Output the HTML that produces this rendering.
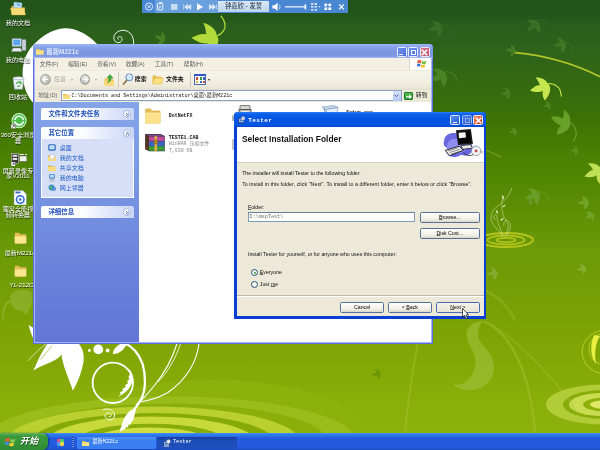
<!DOCTYPE html>
<html lang="zh-CN">
<head>
<meta charset="utf-8">
<title>Tester Setup</title>
<style>
*{box-sizing:border-box;margin:0;padding:0}
html,body{width:600px;height:450px;overflow:hidden;background:#4d7f14}
body{position:relative;filter:blur(0.35px);font-family:"Liberation Sans","Noto Sans CJK SC",sans-serif;font-size:5.6px;color:#000}
.abs{position:absolute}
.win,.layer{will-change:transform}
#bg{position:absolute;left:0;top:0;width:600px;height:450px}
.t{position:absolute;white-space:nowrap;line-height:1}
.cn{font-family:"Liberation Sans","Noto Sans CJK SC",sans-serif}
.mono{font-family:"Liberation Mono","Noto Sans CJK SC",monospace}
/* desktop icons */
.dlabel{position:absolute;color:#fff;font-size:6.1px;line-height:5.6px;text-align:center;width:44px;text-shadow:0.5px 0.5px 0.6px rgba(0,0,0,.75)}

/* windows */
.win{position:absolute}
.tb{position:absolute;left:0;top:0;right:0}
.cap{position:absolute;width:10px;height:9.6px;border-radius:1.5px;border:0.6px solid #fff}
.btn{position:absolute;height:11px;border:0.7px solid #56729c;border-radius:1.6px;background:linear-gradient(#fefefd,#f1efe6 70%,#d9d5c6);font-size:5.25px;text-align:center;line-height:9.4px;color:#000;letter-spacing:-0.02px}
.btn u,.dt u{text-decoration-thickness:0.35px;text-underline-offset:0.3px;text-decoration-color:rgba(0,0,0,.55)}
.dt{position:absolute;white-space:nowrap;font-size:5.25px;line-height:6px;color:#111}
.ph{position:absolute;left:5.9px;width:92.6px;height:12px;border-radius:2px 2px 0 0;background:linear-gradient(90deg,#fff 0%,#fbfcff 45%,#c9d5f8 100%);color:#1f4fb8;font-weight:bold;font-size:6.4px;line-height:12px;padding-left:7.4px;white-space:nowrap}
.ph i{position:absolute;right:3px;top:2px;width:8px;height:8px;border-radius:50%;background:#fff;border:0.5px solid #a9b9e0;font-style:normal;font-weight:normal;font-size:5px;line-height:6.6px;text-align:center;color:#2a4fa8}
.pi{position:absolute;left:24.5px;color:#215dc6;font-size:6px;line-height:7px;white-space:nowrap}
.pic{position:absolute;left:12.5px;width:8px;height:7.5px}
.mi{position:absolute;top:2.6px;font-size:5.7px;line-height:7px;color:#5b5b5b;white-space:nowrap}
</style>
</head>
<body>
<!-- BACKGROUND -->
<svg id="bg" viewBox="0 0 600 450">
<defs>
<linearGradient id="gbg" x1="0" y1="0" x2="0" y2="1">
<stop offset="0" stop-color="#22531a"/>
<stop offset="0.045" stop-color="#25571b"/>
<stop offset="0.05" stop-color="#2a5d1c"/>
<stop offset="0.12" stop-color="#2e631a"/>
<stop offset="0.25" stop-color="#3c7008"/>
<stop offset="0.36" stop-color="#4d8302"/>
<stop offset="0.48" stop-color="#5f9005"/>
<stop offset="0.55" stop-color="#6a9a08"/>
<stop offset="0.73" stop-color="#7da303"/>
<stop offset="0.9" stop-color="#8aae0a"/>
<stop offset="1" stop-color="#8fb30d"/>
</linearGradient>
<path id="leaf" d="M0 0 C-2 -5 -8 -7 -12.5 -6.5 C-10 -4 -9 -1 -8 1 C-12 1 -15 4 -18 6.5 C-14 8 -9 9 -5 7 C-6 11 -5 14 -3 16.5 C0 13 3 8 2 3 C1.5 1.5 1 0.5 0 0Z"/>
<path id="stem" d="M0 -0.3 C5 -1 10 2 12 6 C13 9 13 11 13.5 12.5" fill="none" stroke-width="1.1"/>
</defs>
<rect width="600" height="450" fill="url(#gbg)"/>
<!-- bottom-left concentric rings -->
<g>
<ellipse cx="212" cy="441" rx="162" ry="61" fill="#8db10c"/>
<ellipse cx="170" cy="441" rx="186" ry="44.5" fill="#9abc1a"/>
<ellipse cx="169" cy="441" rx="158" ry="37.4" fill="#8bae0a"/>
<ellipse cx="153" cy="441" rx="146" ry="34.4" fill="#b9d02e"/>
<ellipse cx="153" cy="441" rx="120" ry="28" fill="#86aa08"/>
<ellipse cx="151" cy="441" rx="103" ry="24.5" fill="#c8da3a"/>
<ellipse cx="151" cy="441" rx="73" ry="17.2" fill="#88ac0a"/>
<ellipse cx="150" cy="441" rx="58" ry="13.4" fill="#d0de42"/>
<ellipse cx="150" cy="441" rx="28" ry="6.4" fill="#8cb00c"/>
</g>
<!-- bottom-right rings -->
<g>
<ellipse cx="604" cy="404.5" rx="58" ry="20" fill="#b2cc38"/>
<ellipse cx="604" cy="404.5" rx="41" ry="14.4" fill="#88ac0a"/>
<ellipse cx="604" cy="404.5" rx="35" ry="11.6" fill="#c9dc50"/>
<ellipse cx="604" cy="404.5" rx="21" ry="6.8" fill="#8db00c"/>
<ellipse cx="604" cy="404.5" rx="14" ry="4.2" fill="#dfe866"/>
</g>
<!-- mid-right small rings -->
<g fill="none" stroke="#bcc81e" opacity="0.9">
<ellipse cx="506" cy="240" rx="27" ry="7" stroke-width="2"/>
<ellipse cx="506" cy="240" rx="18.5" ry="4.5" stroke-width="1.8"/>
<ellipse cx="506" cy="240" rx="9.5" ry="2.1" stroke-width="1.6"/>
</g>
<!-- faint swooshes bottom right -->
<g fill="none" stroke="#a8c63a" opacity="0.42">
<path d="M483 321 C510 332 530 370 535 433" stroke-width="2.4"/>
<path d="M489.5 323 C530 350 565 390 583 423" stroke-width="1.2"/>
<path d="M422 322 C414 360 408 400 405 433" stroke-width="2"/>
</g>
<path d="M482.7 320.7 C472 322 465 328 466.7 336 C468 346 476 352 475.5 362 C475 372 470 380 463 383.8 C459 385 455 384.6 452.4 383 C456 388 464 391 472 390 C480 389 486 386 490 380 C496 372 495 362 490 354 C485 346 478 342 478 334 C478 328 480 324 482.7 320.7Z" fill="#a8c548" opacity="0.5"/>
<path d="M484 290 C498 296 508 306 515 320" fill="none" stroke="#9dbd34" stroke-width="3" opacity="0.35"/>
<!-- white blob upper-left -->
<path d="M33.4 103 C27 96 23 86 22.6 74 C22.4 60 28 50 34.5 43.8 C42 36 52 29 64.8 28.2 C76 28 88 34 97 44 L124 70 L124 120 L34 120Z" fill="#fff"/>
<path d="M118.5 39.5 C117 38 118.4 36 120.4 36.6 C123 37.4 122.6 42 119 42.6 C114.6 43.2 112.4 38 114.8 34.4 C117.6 30 125.6 28.6 130 33 C133 36 133.8 40 133.6 44" fill="none" stroke="#fff" stroke-width="0.9"/>
<!-- lime leaves top -->
<use href="#leaf" transform="translate(217,36) rotate(16) scale(1.34)" fill="#b2da3a"/>
<path d="M217 36 C222 34 226 29 225 24 C224.4 20 222.6 18 220.8 15.8" fill="none" stroke="#b2da3a" stroke-width="1.3"/>
<use href="#leaf" transform="translate(165,38.5) rotate(35) scale(0.55)" fill="#457f26"/>
<!-- right-side leaves -->
<use href="#leaf" transform="translate(548,84) rotate(0) scale(1.0)" fill="#c6e650"/><use href="#stem" transform="translate(548,84) rotate(0) scale(1.0)" stroke="#c6e650"/>
<use href="#leaf" transform="translate(600.5,168) rotate(-8) scale(0.95)" fill="#bfe055"/><use href="#stem" transform="translate(600.5,168) rotate(-8) scale(0.95)" stroke="#bfe055"/>
<use href="#leaf" transform="translate(570,123) rotate(38) scale(1.05)" fill="#69a02a"/><use href="#stem" transform="translate(570,123) rotate(38) scale(1.05)" stroke="#69a02a"/>
<use href="#leaf" transform="translate(441,25.6) rotate(0) scale(0.7)" fill="#386d26"/><use href="#stem" transform="translate(441,25.6) rotate(0) scale(0.7)" stroke="#386d26"/>
<use href="#leaf" transform="translate(536.6,21.3) rotate(-25) scale(0.7)" fill="#3a7026"/><use href="#stem" transform="translate(536.6,21.3) rotate(-25) scale(0.7)" stroke="#3a7026"/>
<use href="#leaf" transform="translate(565,42.6) rotate(5) scale(0.65)" fill="#3f7624"/><use href="#stem" transform="translate(565,42.6) rotate(5) scale(0.65)" stroke="#3f7624"/>
<use href="#leaf" transform="translate(515.3,49.7) rotate(20) scale(0.5)" fill="#457c24"/><use href="#stem" transform="translate(515.3,49.7) rotate(20) scale(0.5)" stroke="#457c24"/>
<use href="#leaf" transform="translate(444.2,72.5) rotate(-10) scale(0.85)" fill="#4a8424"/><use href="#stem" transform="translate(444.2,72.5) rotate(-10) scale(0.85)" stroke="#4a8424"/>
<use href="#leaf" transform="translate(510,92) rotate(10) scale(0.5)" fill="#477f1e"/>
<use href="#leaf" transform="translate(550,104) rotate(0) scale(0.4)" fill="#4d8620"/>
<use href="#leaf" transform="translate(516,130) rotate(0) scale(0.4)" fill="#568c1e"/>
<use href="#leaf" transform="translate(578,150) rotate(20) scale(0.4)" fill="#5a901e"/>
<use href="#leaf" transform="translate(538,192.4) rotate(-5) scale(0.75)" fill="#6b9e28"/><use href="#stem" transform="translate(538,192.4) rotate(-5) scale(0.75)" stroke="#6b9e28"/>
<use href="#leaf" transform="translate(588,201) rotate(10) scale(0.55)" fill="#72a428"/>
<use href="#leaf" transform="translate(592,213) rotate(-20) scale(0.45)" fill="#72a428"/>
<use href="#leaf" transform="translate(532,201) rotate(0) scale(0.3)" fill="#68992a"/>
<use href="#leaf" transform="translate(497,272) rotate(10) scale(0.55)" fill="#82aa2c"/>
<use href="#leaf" transform="translate(585,267) rotate(0) scale(0.45)" fill="#88ae30"/>
<use href="#leaf" transform="translate(380,372) rotate(0) scale(0.45)" fill="#6b9608"/>
<use href="#leaf" transform="translate(343,318) rotate(0) scale(0.4)" fill="#6b9608"/>
<path d="M515 52.6 C545 55.4 575 64 600 76.7" fill="none" stroke="#b0c42c" stroke-width="1.7"/>
<path d="M485 149.5 L501 157" fill="none" stroke="#8fae28" stroke-width="0.8"/>
<!-- white sprig mid-right -->
<g fill="none" stroke="#d2e2a0" stroke-width="0.6" opacity="0.9">
<path d="M503 236 C498 230 491 224 491 217.3 C491 210 497 207 500.3 204 C504 200.6 508 197 509.7 193.3 C510.6 191.4 511.2 189.6 511.7 188"/>
<path d="M505.5 236 C507 232 508.6 228 508 225 C507 220 503.6 218 503 214.7 C502.4 211 501.4 208 501.7 205.3 C502 202 502.4 199 503 196"/>
<path d="M503 236 C500 228 497 222 497 217 C497 214 495 214 494 216 C493 218.4 494.6 220 496 219"/>
<path d="M505 236 C510 232 512 226 509 222 C506 218 503 222 504 226"/>
</g>
<g fill="#e6f0c8" opacity="0.9">
<ellipse cx="503" cy="197.3" rx="0.8" ry="2.1" transform="rotate(-10 503 197.3)"/>
<ellipse cx="504" cy="206" rx="0.8" ry="1.8" transform="rotate(50 504 206)"/>
<ellipse cx="497" cy="212" rx="0.8" ry="1.8" transform="rotate(-20 497 212)"/>
<ellipse cx="502" cy="219.3" rx="0.8" ry="1.9" transform="rotate(55 502 219.3)"/>
</g>
<!-- right edge thin yellow circles -->
<g fill="none" stroke="#d4e23a" stroke-width="0.8" opacity="0.8">
<ellipse cx="606" cy="352" rx="24" ry="22"/>
<ellipse cx="606" cy="349" rx="17" ry="16"/>
</g>
<path d="M594 335 C590 345 590 356 596 364 C594 352 596 342 600 336Z" fill="#e8f040"/>
<!-- faint leaf left -->
<g fill="#a4c455" opacity="0.4"><path d="M10 296 C14 289 26 288 31 292 C33 298 32 306 28 312 C26 316 24 314 22 310 C18 312 12 308 10 302Z"/><path d="M9 300 C3 304 1 312 3 321 L4.4 321 C3 313 5 306 10 302Z"/></g>
<path d="M28.5 325 C30 330 31.5 335 33.6 339.4 L33.6 328Z" fill="#fff"/>
<!-- white floral bottom-left -->
<g fill="#fff">
<path d="M33.4 370.6 C38 360 42 351 48 343 L66 343 C66 350 62 356 55 360 C48 364 40 366 33.4 370.6Z"/>
<path d="M61.5 343 C60 352 63 364 66 372 C68.5 379 71 385 72.8 390.6 C77 384 82 372 83.6 361 C84.5 353 82 347 78 343Z"/>
<circle cx="98.3" cy="349.4" r="4.9"/>
<circle cx="89.4" cy="350.5" r="1.4"/>
<circle cx="107.7" cy="350.5" r="1.9"/>
<path d="M112.8 354 C113 349 117 345 123 343 L127 343 C125 349 120 354 112.8 354Z"/>
<path d="M128.3 368.3 C135 374 136 388 118.3 396.8 L121 393.6 L119.6 392.6 L123.4 390.4 L122.2 389 L126 386.8 L124.8 385.4 L128.2 383 L127 381.6 L129.6 378.8 L128.4 377.2 L130 374 C130 372 129.4 370 128.3 368.3Z"/>
<path d="M136 408 C128 410 122 418 120.6 431.7 L123.5 429 L124 430.4 L126.5 426.6 L127.2 428 L129.4 424 L130.4 425 L132 420.6 L133 421.4 L134 417 C135 414 136 411 136 408Z"/>
</g>
<path d="M40.5 359.5 L51.7 346" stroke="#86aa08" stroke-width="0.6" fill="none"/>
<g fill="none" stroke="#fff">
<path d="M28 361 C33 355 39 349 46 344" stroke-width="0.6"/>
<circle cx="112.8" cy="382.8" r="20.2" stroke-width="1.8"/>
<path d="M124 343 C132 346 139 354 142.6 364 C146 376 146 390 141 399.4 C137 407 131 413 127 419 C124 424 122 428 120.6 431" stroke-width="2.3"/>
<path d="M103 409.6 C109 407.6 115 411 114.6 416 C114.2 420.6 107.4 421.4 105.4 417.4 C103.8 414 108 411.4 110.6 413.6 C112.4 415.4 110.4 417.6 108.6 416.4" stroke-width="0.9"/>
<path d="M177 343.5 C172 360 163 375 154 386 C148 394 142 400 136 405" stroke-width="1.1"/>
<path d="M180.5 343.5 C176 358 168 372 158 382" stroke-width="0.8"/>
<path d="M199 343.5 C197 362 186 380 168 392.5 C158 398 148 401 139 402" stroke-width="1.1"/>
</g>
</svg>

<!-- DESKTOP ICONS -->
<div class="layer abs" style="left:0;top:0;width:60px;height:300px">
<svg class="abs" style="left:9.6px;top:1.4px;width:17px;height:15px" viewBox="0 0 34 30"><path d="M3 10 H13 L16 13 H30 V28 H3Z" fill="#dcb44a"/><path d="M8 2 L24 4 L23 20 L7 18Z" fill="#b4daf6" stroke="#7fa6cc" stroke-width="0.8"/><path d="M1 14 H28 L31 28 H4Z" fill="#f7da78" stroke="#d4a83a" stroke-width="0.8"/><path d="M14 6 L20 9" stroke="#4a8ad8" stroke-width="2.4"/></svg>
<div class="dlabel" style="left:-4px;top:19.6px">我的文档</div>
<svg class="abs" style="left:9.6px;top:38px;width:17px;height:15px" viewBox="0 0 34 30"><rect x="4" y="1" width="19" height="16" rx="2" fill="#d8e0ec" stroke="#7a8698" stroke-width="1"/><rect x="6.6" y="3.4" width="13.8" height="11" fill="#5aa4ec"/><rect x="24" y="3" width="8" height="22" rx="1" fill="#c8d0dc" stroke="#7a8698" stroke-width="1"/><path d="M6 20 H21 L24 27 H3Z" fill="#e6eaf0" stroke="#8a94a4" stroke-width="0.8"/></svg>
<div class="dlabel" style="left:-4px;top:56.6px">我的电脑</div>
<svg class="abs" style="left:11px;top:75.4px;width:15px;height:15.4px" viewBox="0 0 30 30"><path d="M4 6 H26 L23 28 H7Z" fill="#e9f1f7" stroke="#8fa0b0" stroke-width="1.2"/><ellipse cx="15" cy="6" rx="11" ry="3" fill="#f8fbfd" stroke="#8fa0b0" stroke-width="1.2"/><path d="M10 17 C11 13 15 11 19 13 L20 11 L22 17 L16 17 L18 15 C15 14 13 15 12 18Z M19 19 C18 23 14 25 11 23Z" fill="#3aa63a"/></svg>
<div class="dlabel" style="left:-4px;top:93.8px">回收站</div>
<svg class="abs" style="left:10.6px;top:113.2px;width:16.2px;height:16.2px" viewBox="0 0 32 32"><circle cx="16" cy="15" r="14" fill="#4cc04a"/><circle cx="16" cy="15" r="14" fill="none" stroke="#d8f4d0" stroke-width="2"/><circle cx="16" cy="15" r="8.6" fill="none" stroke="#fff" stroke-width="3.4"/><path d="M3 15 H29" stroke="#4cc04a" stroke-width="3"/><rect x="0" y="22" width="9" height="9" fill="#fff" stroke="#333" stroke-width="0.8"/><path d="M2.4 28.6 L6.4 24.6 M3.6 24.4 H6.6 V27.4" stroke="#111" stroke-width="1.2" fill="none"/></svg>
<div class="dlabel" style="left:-4px;top:132px">360安全浏览<br>器</div>
<svg class="abs" style="left:10.6px;top:152.6px;width:16.4px;height:13.4px" viewBox="0 0 33 27"><rect x="1" y="1" width="14" height="20" fill="#3a3a3a" stroke="#ddd" stroke-width="1"/><rect x="3.4" y="3.6" width="9" height="4" fill="#e8e8e8"/><rect x="3.4" y="10" width="9" height="4" fill="#e8e8e8"/><rect x="17" y="6" width="15" height="11" fill="#f0f0f0" stroke="#555" stroke-width="1"/><path d="M17 3 H26 M28 3 H32" stroke="#eee" stroke-width="2"/><rect x="0" y="18" width="9" height="9" fill="#fff" stroke="#333" stroke-width="0.8"/><path d="M2.4 24.6 L6.4 20.6 M3.6 20.4 H6.6 V23.4" stroke="#111" stroke-width="1.2" fill="none"/></svg>
<div class="dlabel" style="left:-4px;top:167.8px">屏幕录像专<br>家V2011</div>
<svg class="abs" style="left:12.6px;top:189.6px;width:14.4px;height:15.6px" viewBox="0 0 29 31"><path d="M2 1 H20 L27 8 V30 H2Z" fill="#fcfcfc" stroke="#8a96a8" stroke-width="1"/><rect x="5" y="3" width="10" height="3.6" fill="#3a6ac8"/><circle cx="14.6" cy="19" r="7.6" fill="none" stroke="#2a6ad0" stroke-width="3"/><circle cx="14.6" cy="19" r="2.6" fill="#2a6ad0"/></svg>
<div class="dlabel" style="left:-4px;top:206.4px">狸窝全能视<br>频转换器</div>
<svg class="abs" style="left:14px;top:232.4px;width:13.4px;height:12px" viewBox="0 0 36 32"><path d="M2 5 C2 3 3 2 5 2 H13 L16 6 H30 C32 6 33 7 33 9 V28 C33 30 32 31 30 31 H5 C3 31 2 30 2 28Z" fill="#e3bd55"/><path d="M2 11 H33 V28 C33 30 32 31 30 31 H5 C3 31 2 30 2 28Z" fill="#fbe690"/></svg>
<div class="dlabel" style="left:-2px;top:250px">最新M221c</div>
<svg class="abs" style="left:14px;top:264.6px;width:13.4px;height:12px" viewBox="0 0 36 32"><path d="M2 5 C2 3 3 2 5 2 H13 L16 6 H30 C32 6 33 7 33 9 V28 C33 30 32 31 30 31 H5 C3 31 2 30 2 28Z" fill="#e3bd55"/><path d="M2 11 H33 V28 C33 30 32 31 30 31 H5 C3 31 2 30 2 28Z" fill="#fbe690"/></svg>
<div class="dlabel" style="left:-0.6px;top:282.2px">YL-212C</div>
</div>
<!-- EXPLORER WINDOW (inactive) -->
<div class="win" id="ex" style="left:33.4px;top:43.5px;width:400px;height:300px;background:#5e6ee0;border-radius:4px 4px 0 0;overflow:hidden">
  <div class="tb" style="height:14.6px;background:linear-gradient(#9db6f5 0%,#86a2ea 22%,#7a95df 55%,#7e9ae4 80%,#8aa6ee 100%)"></div>
  <svg class="abs" style="left:2.8px;top:4.2px;width:8px;height:7px" viewBox="0 0 16 14"><path d="M0 2 H6 L8 4 H15 V13 H0Z" fill="#e8c860"/><path d="M0 5 H15 V13 H0Z" fill="#fbe38a"/></svg>
  <div class="t" style="left:13.3px;top:4.6px;font-size:6.3px;font-weight:bold;color:#dfe8fa;letter-spacing:0.1px">最新M221c</div>
  <div class="cap" style="left:363.6px;top:3.4px;background:linear-gradient(135deg,#6f92ee,#4a6fde);border-color:#e8eefc"><b class="abs" style="left:1.8px;top:5.6px;width:3.4px;height:1.4px;background:#fff"></b></div>
  <div class="cap" style="left:374.9px;top:3.4px;background:linear-gradient(135deg,#6f92ee,#4a6fde);border-color:#e8eefc"><b class="abs" style="left:1.8px;top:1.8px;width:5.2px;height:5px;border:0.7px solid #fff;border-top-width:1.5px"></b></div>
  <div class="cap" style="left:386.6px;width:10.6px;top:3.4px;background:linear-gradient(135deg,#d4788c,#bf566e);border-color:#f4e4ea"><svg class="abs" style="left:0.9px;top:0.7px;width:7px;height:7px" viewBox="0 0 7 7"><path d="M0.8 0.8 L6.2 6.2 M6.2 0.8 L0.8 6.2" stroke="#fff" stroke-width="1.6"/></svg></div>
  <!-- client -->
  <div class="abs" style="left:2.2px;top:14.2px;width:395.8px;height:284px;background:#fff;outline:1px solid #a4b4f5">
    <!-- menubar -->
    <div class="abs" style="left:0;top:0;width:100%;height:11.6px;background:#f3f0e3">
      <span class="mi" style="left:4.6px">文件(F)</span>
      <span class="mi" style="left:33px">编辑(E)</span>
      <span class="mi" style="left:62px">查看(V)</span>
      <span class="mi" style="left:90.6px">收藏(A)</span>
      <span class="mi" style="left:119.6px">工具(T)</span>
      <span class="mi" style="left:148.6px">帮助(H)</span>
      <div class="abs" style="right:0;top:0;width:21.6px;height:11.8px;background:#fff;border-left:0.6px solid #d9d6c8">
        <svg class="abs" style="left:6.6px;top:1.2px;width:10px;height:9.6px" viewBox="0 0 20 18"><path d="M1 3 C4 1 7 1 9 3 L7.6 8.4 C5.6 6.6 3 6.8 0 8.6Z" fill="#e8542a"/><path d="M10.6 3.4 C13 5 16 5 19 3 L17.4 8.6 C14.6 10.4 11.8 10.2 9.2 8.6Z" fill="#7cbf3c"/><path d="M-0.4 10 C2.6 8.2 5.2 8.2 7.2 9.8 L5.8 15 C3.8 13.2 1.2 13.4 -2 15.2Z" fill="#3c78d8"/><path d="M8.8 10.2 C11.4 11.8 14.2 11.8 17 10 L15.4 15.6 C12.6 17.2 9.8 17 7.4 15.4Z" fill="#f4c02c"/></svg>
      </div>
    </div>
    <!-- toolbar -->
    <div class="abs" style="left:0;top:11.6px;width:100%;height:20.2px;background:linear-gradient(#e2decd 0,#f6f4ea 1px,#f5f3e9 25%,#efecdd 75%,#e4e0ce)">
      <div class="abs" style="left:5.3px;top:4.6px;width:10.6px;height:10.6px;border-radius:50%;background:radial-gradient(circle at 35% 30%,#e4e4e0,#b4b4ae 75%,#9c9c96);border:0.5px solid #a5a59e"></div>
      <svg class="abs" style="left:7.2px;top:6.6px;width:6.8px;height:6.6px" viewBox="0 0 10 10"><path d="M5 1 L1 5 L5 9 M1.2 5 H9" stroke="#fff" stroke-width="2" fill="none"/></svg>
      <span class="t" style="left:18.8px;top:7.2px;font-size:5.7px;color:#aaa79a">后退</span>
      <span class="t" style="left:35.4px;top:8.2px;font-size:4px;color:#aaa79a">▾</span>
      <div class="abs" style="left:44.7px;top:4.6px;width:10.6px;height:10.6px;border-radius:50%;background:radial-gradient(circle at 35% 30%,#e4e4e0,#b4b4ae 75%,#9c9c96);border:0.5px solid #a5a59e"></div>
      <svg class="abs" style="left:46.6px;top:6.6px;width:6.8px;height:6.6px" viewBox="0 0 10 10"><path d="M5 1 L9 5 L5 9 M8.8 5 H1" stroke="#fff" stroke-width="2" fill="none"/></svg>
      <span class="t" style="left:59.8px;top:8.2px;font-size:4px;color:#aaa79a">▾</span>
      <svg class="abs" style="left:68.6px;top:4px;width:11px;height:12px" viewBox="0 0 22 24"><path d="M1 9 H8 L10 11 H20 V23 H1Z" fill="#e6bf4e"/><path d="M1 13 H20 V23 H1Z" fill="#f9dc78"/><path d="M12 1 L18 8 H14.4 C14.4 13 12 16 7 17 C10 14 10.4 11 10 8 H6Z" fill="#3fae36" stroke="#1f7a1c" stroke-width="0.8"/></svg>
      <div class="abs" style="left:82.6px;top:2.6px;width:0.6px;height:15px;background:#cfcab8"></div>
      <svg class="abs" style="left:86.4px;top:3.6px;width:12px;height:12.6px" viewBox="0 0 24 25"><path d="M3 22 L11 13" stroke="#8a6a3a" stroke-width="3.4" stroke-linecap="round"/><circle cx="14.6" cy="8.6" r="7" fill="#cfe8fb" stroke="#5a7fb5" stroke-width="1.8"/><path d="M10.6 6.6 C11.8 4.4 14 3.6 16 4" stroke="#fff" stroke-width="1.6" fill="none"/></svg>
      <span class="t" style="left:99.6px;top:6.8px;font-size:5.9px;font-weight:bold;color:#111">搜索</span>
      <svg class="abs" style="left:117px;top:4.6px;width:12px;height:11px" viewBox="0 0 24 22"><path d="M1 3 H8 L10 5.4 H19 V17 H1Z" fill="#e6bf4e"/><path d="M5 8 H23 L19.4 20 H1Z" fill="#fae07e" stroke="#d7a93a" stroke-width="0.8"/></svg>
      <span class="t" style="left:130.9px;top:6.8px;font-size:5.9px;font-weight:bold;color:#111">文件夹</span>
      <div class="abs" style="left:154.6px;top:2.6px;width:0.6px;height:15px;background:#cfcab8"></div>
      <div class="abs" style="left:158.8px;top:4.4px;width:12.4px;height:11.2px;background:#fff;border:0.7px solid #4a66b8;border-top:2.2px solid #2f56c8">
        <i class="abs" style="left:1.2px;top:1.2px;width:2.2px;height:2.2px;background:#d14a3a"></i><i class="abs" style="left:4.6px;top:1.2px;width:2.2px;height:2.2px;background:#3a9a4a"></i><i class="abs" style="left:8px;top:1.2px;width:2.2px;height:2.2px;background:#3a63c9"></i>
        <i class="abs" style="left:1.2px;top:4.8px;width:2.2px;height:2.2px;background:#e0b03a"></i><i class="abs" style="left:4.6px;top:4.8px;width:2.2px;height:2.2px;background:#3a63c9"></i><i class="abs" style="left:8px;top:4.8px;width:2.2px;height:2.2px;background:#d14a3a"></i>
      </div>
      <span class="t" style="left:172.6px;top:8px;font-size:4px;color:#222">▾</span>
    </div>
    <!-- address bar -->
    <div class="abs" style="left:0;top:31.8px;width:100%;height:12px;background:#ece9d8">
      <span class="t" style="left:3px;top:3.2px;font-size:5.7px;color:#6a6a64">地址(D)</span>
      <div class="abs" style="left:25.4px;top:0;width:341px;height:11px;background:#fff;border:0.6px solid #8aa0c4"></div>
      <svg class="abs" style="left:27.6px;top:3.4px;width:7.4px;height:6.4px" viewBox="0 0 16 14"><path d="M0 2 H6 L8 4 H15 V13 H0Z" fill="#e0b84c"/><path d="M0 5 H15 V13 H0Z" fill="#f9dd7c"/></svg>
      <span class="t mono" id="addr" style="left:36.2px;top:4.4px;font-size:5.15px;color:#222;letter-spacing:-0.03px">C:\Documents and Settings\Administrator\桌面\最新M221c</span>
      <div class="abs" style="left:357.4px;top:1.4px;width:8.4px;height:9.2px;background:linear-gradient(#d6e2fb,#b4c8f4);border-radius:1px"><svg class="abs" style="left:1.8px;top:3px;width:4.8px;height:3.4px" viewBox="0 0 8 5"><path d="M0.8 0.8 L4 4 L7.2 0.8" stroke="#3a4f8a" stroke-width="1.5" fill="none"/></svg></div>
      <div class="abs" style="left:368.4px;top:1.6px;width:9.4px;height:8.8px;background:linear-gradient(#5cc35a,#2b952f);border:0.5px solid #1f7a24;border-radius:1px"><svg class="abs" style="left:1.2px;top:1.4px;width:6.4px;height:5.6px" viewBox="0 0 10 8"><path d="M0 3 H5 V0.4 L9.6 4 L5 7.6 V5 H0Z" fill="#fff"/></svg></div>
      <span class="t" style="left:380.6px;top:3.2px;font-size:5.8px;color:#111">转到</span>
    </div>
    <!-- left pane -->
    <div class="abs" style="left:0;top:43.8px;width:104px;height:240.2px;background:linear-gradient(#86a4e8 0%,#7a98e4 30%,#6b82da 70%,#6375d6 100%)">
      <div class="ph" style="top:5.8px">文件和文件夹任务<i><svg viewBox="0 0 8 8" style="position:absolute;left:0;top:0;width:7px;height:7px"><path d="M2.2 2.2 L4 3.9 L5.8 2.2 M2.2 4.3 L4 6 L5.8 4.3" fill="none" stroke="#2a4fa8" stroke-width="0.9"/></svg></i></div>
      <div class="ph" style="top:25.0px">其它位置<i><svg viewBox="0 0 8 8" style="position:absolute;left:0;top:0;width:7px;height:7px"><path d="M2.2 3.9 L4 2.2 L5.8 3.9 M2.2 6 L4 4.3 L5.8 6" fill="none" stroke="#2a4fa8" stroke-width="0.9"/></svg></i></div>
      <div class="abs" style="left:5.9px;top:37px;width:92.6px;height:58.8px;background:#d6dff7;border:0.5px solid #fff;border-top:none"></div>
      <div class="ph" style="top:104.2px">详细信息<i><svg viewBox="0 0 8 8" style="position:absolute;left:0;top:0;width:7px;height:7px"><path d="M2.2 2.2 L4 3.9 L5.8 2.2 M2.2 4.3 L4 6 L5.8 4.3" fill="none" stroke="#2a4fa8" stroke-width="0.9"/></svg></i></div>
      <!-- list -->
      <svg class="pic" style="top:42.2px" viewBox="0 0 16 15"><rect x="1" y="1" width="14" height="12" rx="2" fill="#4d8fd8" stroke="#2c5fa8"/><rect x="3.4" y="3" width="9" height="7" fill="#dff0ff"/><path d="M6 5 L10 9" stroke="#3a7acc" stroke-width="1.6"/></svg>
      <span class="pi" style="top:42.6px">桌面</span>
      <svg class="pic" style="top:52.2px" viewBox="0 0 16 15"><path d="M0 3 H6 L8 5 H15 V14 H0Z" fill="#e0b84c"/><path d="M0 6 H15 V14 H0Z" fill="#f9dd7c"/><rect x="4" y="1.6" width="8" height="8" fill="#fff" stroke="#9ab" stroke-width="0.6"/></svg>
      <span class="pi" style="top:52.6px">我的文档</span>
      <svg class="pic" style="top:62.4px" viewBox="0 0 16 15"><path d="M0 3 H6 L8 5 H15 V14 H0Z" fill="#e0b84c"/><path d="M0 6 H15 V14 H0Z" fill="#f9dd7c"/></svg>
      <span class="pi" style="top:62.6px">共享文档</span>
      <svg class="pic" style="top:72.2px" viewBox="0 0 16 15"><rect x="3" y="0.6" width="10" height="8.4" rx="1" fill="#5a9ae0" stroke="#2c5fa8" stroke-width="0.8"/><rect x="4.6" y="2" width="6.8" height="5" fill="#bfe3ff"/><path d="M5 11 H11 L13 14.4 H3Z" fill="#c9ced8" stroke="#7a8394" stroke-width="0.6"/></svg>
      <span class="pi" style="top:72.6px">我的电脑</span>
      <svg class="pic" style="top:82.2px" viewBox="0 0 16 15"><circle cx="7" cy="7" r="6" fill="#3f8fe0"/><path d="M3 5 C5 3 8 4 9 6 C10 8 7 10 5 10 C4 8 2 7 3 5Z" fill="#58b85a"/><rect x="8.6" y="7.6" width="6.6" height="5" fill="#5a9ae0" stroke="#2c5fa8" stroke-width="0.7"/></svg>
      <span class="pi" style="top:82.6px">网上邻居</span>
    </div>
    <!-- file area -->
    <div class="abs" style="left:104px;top:43.8px;width:291.8px;height:240.2px;background:#fff">
      <svg class="abs" style="left:5.2px;top:5px;width:18px;height:18px" viewBox="0 0 36 36"><path d="M2 6 C2 4 3 3 5 3 H13 L16 7 H30 C32 7 33 8 33 10 V30 C33 32 32 33 30 33 H5 C3 33 2 32 2 30Z" fill="#e3bd55"/><path d="M2 12 H33 V30 C33 32 32 33 30 33 H5 C3 33 2 32 2 30Z" fill="#fbe28a"/><path d="M2 12 H33" stroke="#fff2b8" stroke-width="1.4"/></svg>
      <span class="t mono" style="left:29.6px;top:12.2px;font-size:4.95px;color:#111;font-weight:bold">DotNetFX</span>
      <!-- winrar icon -->
      <svg class="abs" style="left:3.6px;top:30.4px;width:23px;height:20.4px" viewBox="0 0 44 40"><path d="M4 4 L34 4 L42 8 L42 38 L12 38 L4 34Z" fill="#222"/><path d="M4 5 L34 5 L41 8.6 L12 8.6Z" fill="#7b4a8c"/><rect x="11" y="9" width="30.4" height="9" fill="#c04898"/><rect x="11" y="18.4" width="30.4" height="9" fill="#3f64c8"/><rect x="11" y="27.8" width="30.4" height="9" fill="#3c9c3c"/><path d="M4 6 L11 9 V37 L4 33.6Z" fill="#5a3a24"/><path d="M4 14 L11 17.4 M4 23 L11 26.6" stroke="#222" stroke-width="1.4"/><rect x="22" y="8" width="5" height="30" fill="#d8b04a"/><rect x="20.6" y="16" width="7.8" height="7" rx="1" fill="#b8862c" stroke="#5a3a10" stroke-width="0.8"/></svg>
      <span class="t mono" style="left:29.6px;top:34.2px;font-size:4.95px;color:#111;font-weight:bold">TESTE1.CAB</span>
      <span class="t mono" style="left:29.6px;top:40.4px;font-size:4.95px;color:#8a8a8a">WinRAR 压缩文件</span>
      <span class="t mono" style="left:29.6px;top:46.8px;font-size:4.95px;color:#8a8a8a">7,630 KB</span>
      <!-- partially hidden icons -->
      <svg class="abs" style="left:99px;top:2.6px;width:14px;height:11px" viewBox="0 0 28 22"><rect x="4" y="1" width="20" height="8" rx="1.4" fill="#d7d7d2" stroke="#4a4a4a" stroke-width="1.4"/><rect x="2" y="9" width="24" height="13" fill="#b9b9b4" stroke="#3a3a3a" stroke-width="1.4"/><rect x="6" y="12" width="16" height="6" fill="#e8e8e4"/></svg>
      <svg class="abs" style="left:182px;top:3.4px;width:18px;height:9px" viewBox="0 0 36 18"><path d="M2 4 L26 1 L34 5 L10 9Z" fill="#c9ddf3" stroke="#5f7fa8" stroke-width="1"/><path d="M10 9 L34 5 L32 16 L12 18Z" fill="#e8f0fa" stroke="#5f7fa8" stroke-width="1"/><path d="M6 7 L10 18" stroke="#3a5f98" stroke-width="1.6"/></svg>
      <span class="t mono" style="left:207px;top:9px;font-size:4.95px;color:#111;font-weight:bold">Setup.exe</span>
      <div class="abs" style="left:92.6px;top:12.6px;width:2.4px;height:6.4px;background:#aeb3b8;border-radius:1px"></div>
      <div class="abs" style="left:92.8px;top:36.6px;width:1.8px;height:11px;background:#c0c4c8;border-radius:1px"></div>
    </div>
  </div>
</div>

<!-- DIALOG (active) -->
<div class="win" id="dlg" style="left:233.7px;top:112.3px;width:252.2px;height:207.1px;background:#0a3fd6;border-radius:4px 4px 0 0;overflow:hidden">
  <div class="tb" style="height:15px;background:linear-gradient(#2a7af6 0%,#0a5ee8 16%,#0552e0 55%,#0656e4 85%,#0446cc 100%)"></div>
  <svg class="abs" style="left:3.6px;top:4.4px;width:7.6px;height:8px" viewBox="0 0 16 17"><rect x="2" y="5" width="10" height="9" fill="#d8e6f8" stroke="#23406e" stroke-width="1.2"/><rect x="4" y="7" width="6" height="4.4" fill="#3a74c4"/><circle cx="11" cy="5" r="4" fill="#e8eef4" stroke="#6a7a8a" stroke-width="0.8"/><circle cx="11" cy="5" r="1.2" fill="#7a8a9a"/><path d="M1 15 H13" stroke="#23406e" stroke-width="1.4"/></svg>
  <div class="t mono" style="left:14.2px;top:6.2px;font-size:6.1px;font-weight:bold;color:#fff;letter-spacing:0.35px">Tester</div>
  <div class="cap" style="left:216.4px;top:3.2px;background:linear-gradient(135deg,#5c93f6,#1f57d6);border-color:#e6eefc"><b class="abs" style="left:1.8px;top:5.6px;width:3.4px;height:1.4px;background:#fff"></b></div>
  <div class="cap" style="left:227.8px;top:3.2px;background:linear-gradient(135deg,#4c7fe6,#2a5cd0);border-color:#9db6ee"><b class="abs" style="left:1.8px;top:1.8px;width:5.2px;height:5px;border:0.7px solid #8fa8e6;border-top-width:1.5px"></b></div>
  <div class="cap" style="left:239.2px;top:3.2px;background:linear-gradient(135deg,#f08a6a,#d2401c);border-color:#fbe8e2"><svg class="abs" style="left:0.9px;top:0.7px;width:7px;height:7px" viewBox="0 0 7 7"><path d="M0.8 0.8 L6.2 6.2 M6.2 0.8 L0.8 6.2" stroke="#fff" stroke-width="1.6"/></svg></div>
  <div class="abs" style="left:2.6px;top:14.8px;width:247px;height:189.7px;background:#ece9d8">
    <div class="abs" style="left:0;top:0;width:100%;height:36px;background:#fff;border-bottom:1px solid #d2cfc0"></div>
    <div class="t" style="left:5.6px;top:7.4px;font-size:9.7px;font-weight:bold;color:#111;transform:scaleX(0.868);transform-origin:0 0" id="hd">Select Installation Folder</div>
    <!-- banner icon -->
    <svg class="abs" style="left:204.4px;top:1.4px;width:42.6px;height:32px" viewBox="0 0 80 60">
      <path d="M6 24 C6 10 24 6 36 12 C48 2 60 12 56 28 C66 42 52 56 38 50 C24 60 4 52 12 38 C4 34 4 28 6 24Z" fill="#6a67e2"/>
      <path d="M12 30 C16 18 30 18 36 24 C44 20 52 28 48 38 C42 50 26 50 20 44 C12 42 10 36 12 30Z" fill="#908df2"/>
      <path d="M28 4 L56 2 L60 30 L32 32Z" fill="#1a1a1a"/><path d="M31 7 L54 5.4 L57 27 L34 29Z" fill="#050505"/><path d="M33 9 L46 8 L46.8 18 L33.8 19Z" fill="#f6f6f6"/>
      <path d="M38 33 L56 31 L59 38 L40 40Z" fill="#e8e8e8" stroke="#111" stroke-width="1.4"/>
      <path d="M8 42 L34 34 L42 42 L16 52Z" fill="#f2f2f2" stroke="#111" stroke-width="1.6"/><path d="M13 43 L33 37 M16 46 L36 40 M19 49 L39 43" stroke="#444" stroke-width="1.1"/>
      <circle cx="66" cy="43" r="9" fill="#eef0f4" stroke="#777" stroke-width="1.2"/><circle cx="66" cy="43" r="2.6" fill="#c04848"/><path d="M58 39 C60 35 64 34 68 34.4" stroke="#9ad" stroke-width="1.6" fill="none"/>
      <path d="M42 46 C46 52 54 53 60 50" stroke="#111" stroke-width="1.4" fill="none"/>
      <path d="M74 44 L79 48 M76 42 L79 45" stroke="#667" stroke-width="0.9"/>
    </svg>
    <div class="dt" id="l1" style="left:5.6px;top:43.6px;letter-spacing:-0.03px">The installer will install Tester to the following folder.</div>
    <div class="dt" id="l2" style="left:5.6px;top:54.6px;letter-spacing:0.06px">To install in this folder, click "Next". To install to a different folder, enter it below or click "Browse".</div>
    <div class="dt" style="left:11.4px;top:77px"><u>F</u>older:</div>
    <div class="abs" style="left:11.3px;top:85px;width:167px;height:10px;background:#fff;border:0.6px solid #7f9db9;border-top-color:#6a7f98"></div>
    <div class="t mono" style="left:13px;top:88.1px;font-size:5.1px;color:#6a6a6a">D:\mspTest\</div>
    <div class="btn" style="left:183.2px;top:84.8px;width:60px"><u>B</u>rowse...</div>
    <div class="btn" style="left:183.2px;top:101.4px;width:60px"><u>D</u>isk Cost...</div>
    <div class="dt" style="left:11.4px;top:124.4px">Install Tester for yourself, or for anyone who uses this computer:</div>
    <div class="abs" style="left:14.8px;top:141.9px;width:7px;height:7px;border-radius:50%;background:radial-gradient(circle,#fff 40%,#e4e4dc);border:0.6px solid #2a4f7c"><b class="abs" style="left:1.9px;top:1.9px;width:2.2px;height:2.2px;border-radius:50%;background:#2fa52f"></b></div>
    <div class="dt" style="left:23.2px;top:142.5px"><u>E</u>veryone</div>
    <div class="abs" style="left:14.8px;top:154.1px;width:7px;height:7px;border-radius:50%;background:radial-gradient(circle,#fff 40%,#e4e4dc);border:0.6px solid #2a4f7c"></div>
    <div class="dt" style="left:23.2px;top:154.7px">Just <u>m</u>e</div>
    <div class="abs" style="left:0;top:168.4px;width:100%;height:0.6px;background:#bdbaab"></div>
    <div class="abs" style="left:0;top:169px;width:100%;height:0.6px;background:#fff"></div>
    <div class="btn" style="left:103.8px;top:175.4px;width:43.4px">Cancel</div>
    <div class="btn" style="left:151.6px;top:175.4px;width:43.4px">&lt; <u>B</u>ack</div>
    <div class="btn" style="left:199.6px;top:175.4px;width:43.4px;border:1.1px solid #4a68b0;line-height:8.8px;background:linear-gradient(#f4f3ec,#e6e3d6)"><u>N</u>ext &gt;</div>
  </div>
</div>
<!-- cursor -->
<svg class="abs" style="left:462.4px;top:307.6px;width:7.6px;height:12px" viewBox="0 0 12 19"><path d="M0.7 0.8 V14.6 L3.9 11.6 L6.2 17.4 L8.6 16.4 L6.2 10.8 H10.6Z" fill="#fff" stroke="#000" stroke-width="1.1"/></svg>

<!-- MEDIA BAR -->
<div class="abs layer" style="left:142px;top:0;width:206px;height:12.8px;background:#4a87d3">
  <div class="abs" style="left:13px;top:0;width:63px;height:12.8px;background:#6aa0de"></div>
  <div class="abs" style="left:76px;top:0.8px;width:51px;height:11.2px;background:linear-gradient(#d9e8f6,#bcd4ee)"></div>
  <svg class="abs" style="left:0;top:0;width:206px;height:12.8px" viewBox="0 0 206 12.8">
    <circle cx="7" cy="6.6" r="3.6" fill="none" stroke="#fff" stroke-width="0.8"/><path d="M5.4 5 L8.6 8.2 M8.6 5 L5.4 8.2" stroke="#fff" stroke-width="0.8"/>
    <rect x="15.4" y="3.6" width="5.4" height="6.4" rx="1" fill="none" stroke="#fff" stroke-width="0.9"/><path d="M18 5.4 V8 H16.6" stroke="#fff" stroke-width="0.8" fill="none"/><path d="M17 2.6 H20.6" stroke="#fff" stroke-width="0.8"/>
    <rect x="29" y="4" width="6.4" height="5.8" fill="#c9dcf2"/>
    <path d="M41.6 4.4 V9.4 M45.6 4.4 L42.6 6.9 L45.6 9.4Z M48.8 4.4 L45.8 6.9 L48.8 9.4Z" fill="#e8f0fa" stroke="#e8f0fa" stroke-width="0.6"/>
    <path d="M55 3.2 L61 6.9 L55 10.6Z" fill="#fff"/>
    <path d="M67.4 4.4 L70.4 6.9 L67.4 9.4Z M70.6 4.4 L73.6 6.9 L70.6 9.4Z M74.6 4.4 V9.4" fill="#e8f0fa" stroke="#e8f0fa" stroke-width="0.6"/>
    <path d="M130.4 5.2 H132.6 L135.6 2.8 V11 L132.6 8.6 H130.4Z" fill="#fff"/><path d="M137 4.6 C138.4 6 138.4 7.8 137 9.2" stroke="#dbe8f8" stroke-width="0.8" fill="none"/>
    <rect x="143" y="6.2" width="21" height="1.3" fill="#e6effa"/><rect x="162.6" y="4.4" width="1.6" height="5" fill="#fff"/>
    <path d="M169 4 H175 M169 6.9 H175 M169 9.8 H175" stroke="#fff" stroke-width="1.3" stroke-dasharray="2.4 1.2"/><path d="M176.4 6.2 L178.6 6.2 L177.5 7.6Z" fill="#fff"/>
    <rect x="182.4" y="3.6" width="2.8" height="2.6" fill="#fff"/><rect x="186.4" y="3.6" width="2.8" height="2.6" fill="#fff"/><rect x="182.4" y="7.4" width="2.8" height="2.6" fill="#fff"/><rect x="186.4" y="7.4" width="2.8" height="2.6" fill="#fff"/>
    <path d="M197.2 4.4 L201.8 9.4 M201.8 4.4 L197.2 9.4" stroke="#fff" stroke-width="1.2"/>
  </svg>
  <div class="t" style="left:76px;width:51px;text-align:center;top:3.2px;font-size:6.3px;color:#0e1a28">钟嘉欣 - 发誓</div>
</div>

<!-- TASKBAR -->
<div class="abs layer" style="left:0;top:432.8px;width:600px;height:17.2px;background:linear-gradient(#4a92f6 0%,#317df0 8%,#2b6fea 20%,#2459dc 30%,#245bde 70%,#2157d6 90%,#1a47b8 100%)">
  <div class="abs" style="left:0;top:0.4px;width:48.4px;height:16.8px;border-radius:0 6px 6px 0;background:linear-gradient(#5eb55c 0%,#3a9a3c 18%,#35953a 60%,#2f8a34 100%);box-shadow:1px 0 1.5px rgba(0,20,90,.6)"></div>
  <svg class="abs" style="left:5.4px;top:3.6px;width:11px;height:10px" viewBox="0 0 20 18"><path d="M1 3 C4 1 7 1 9 3 L7.6 8.4 C5.6 6.6 3 6.8 0 8.6Z" fill="#ee5a30"/><path d="M10.6 3.4 C13 5 16 5 19 3 L17.4 8.6 C14.6 10.4 11.8 10.2 9.2 8.6Z" fill="#8ed04a"/><path d="M-0.4 10 C2.6 8.2 5.2 8.2 7.2 9.8 L5.8 15 C3.8 13.2 1.2 13.4 -2 15.2Z" fill="#4a8af0"/><path d="M8.8 10.2 C11.4 11.8 14.2 11.8 17 10 L15.4 15.6 C12.6 17.2 9.8 17 7.4 15.4Z" fill="#fad040"/></svg>
  <div class="t" style="left:20px;top:4px;font-size:9px;font-weight:bold;font-style:italic;color:#fff;text-shadow:0.6px 0.6px 0.6px rgba(0,40,0,.7);letter-spacing:0.2px">开始</div>
  <svg class="abs" style="left:56px;top:5.4px;width:9px;height:9px" viewBox="0 0 18 18"><circle cx="6" cy="6" r="4.4" fill="#f04a8a"/><circle cx="12" cy="6" r="4.4" fill="#4ad06a"/><circle cx="6" cy="12" r="4.4" fill="#4a9af0"/><circle cx="12" cy="12" r="4.4" fill="#f0d84a"/></svg>
  <div class="abs" style="left:72.4px;top:4px;width:1.6px;height:10px;background:repeating-linear-gradient(#1a3f9c 0 1px,#6a9af0 1px 2px)"></div>
  <div class="abs" style="left:77px;top:4px;width:78.6px;height:11.6px;border-radius:1.4px;background:linear-gradient(#4c92f8,#3a80f2 30%,#3a7ef0)"></div>
  <svg class="abs" style="left:82.4px;top:6.6px;width:7.6px;height:6.6px" viewBox="0 0 16 14"><path d="M0 2 H6 L8 4 H15 V13 H0Z" fill="#e0b84c"/><path d="M0 5 H15 V13 H0Z" fill="#fbe38a"/></svg>
  <div class="t mono" style="left:92.4px;top:7.3px;font-size:5.2px;color:#fff">最新M221c</div>
  <div class="abs" style="left:157px;top:4px;width:79.6px;height:11.6px;border-radius:1.4px;background:linear-gradient(#173e9e,#1d4cb6 30%,#1f50bc)"></div>
  <svg class="abs" style="left:162.8px;top:5.8px;width:8px;height:8.4px" viewBox="0 0 16 17"><rect x="2" y="5" width="10" height="9" fill="#d8e6f8" stroke="#23406e" stroke-width="1.2"/><rect x="4" y="7" width="6" height="4.4" fill="#3a74c4"/><circle cx="11" cy="5" r="4" fill="#e8eef4" stroke="#6a7a8a" stroke-width="0.8"/><path d="M1 15 H13" stroke="#c8d4e8" stroke-width="1.4"/></svg>
  <div class="t mono" style="left:173px;top:7.3px;font-size:5.2px;color:#fff">Tester</div>
</div>

</body>
</html>
